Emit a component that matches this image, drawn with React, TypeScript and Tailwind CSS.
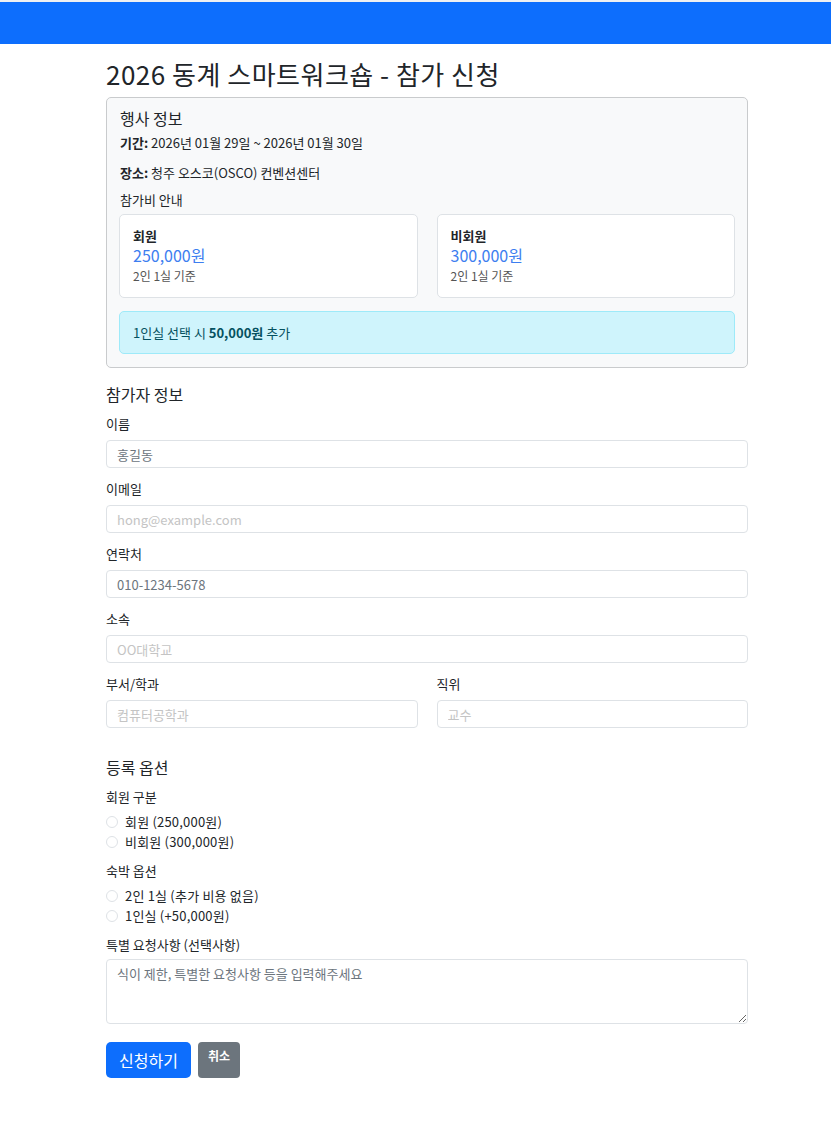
import React from 'react';

const font = { fontFamily: '"Noto Sans CJK KR", "Noto Sans", sans-serif' };

const inputCls =
  'block w-full h-[28px] px-[10px] text-[13px] text-[#212529] bg-white border border-[#dee2e6] rounded-[4px] placeholder:text-[#6c757d] outline-none';

const Field: React.FC<{ label: string; placeholder: string; faint?: boolean }> = ({ label, placeholder, faint }) => (
  <div className="mb-[12px]">
    <label className="block text-[13px] leading-[18px] mb-[7px] text-[#212529]">{label}</label>
    <input
      className={inputCls + (faint ? ' placeholder:text-[#c4c4c4]' : '')}
      placeholder={placeholder}
    />
  </div>
);

const Radio: React.FC<{ name: string; label: string }> = ({ name, label }) => (
  <label className="flex items-center h-[20px] text-[13px] text-[#212529] tracking-[0.2px]">
    <input
      type="radio"
      name={name}
      className="appearance-none w-[12px] h-[12px] rounded-full border border-[#dee2e6] bg-white mr-[7px]"
    />
    {label}
  </label>
);

const FeeCard: React.FC<{ title: string; price: string }> = ({ title, price }) => (
  <div className="flex-1 h-[84px] bg-white border border-[#dee2e6] rounded-[5px] px-[13px] pt-[12px]">
    <div className="text-[13px] leading-[18px] font-bold text-[#212529]">{title}</div>
    <div className="text-[16px] leading-[21px] text-[#3d7ef0]">{price}</div>
    <div className="text-[12px] leading-[20px] text-[#555]">2인 1실 기준</div>
  </div>
);

export default function App() {
  return (
    <div className="min-h-[1144px] bg-white text-[#212529]" style={font}>
      <div className="border-t-2 border-[#eef0f2] h-[44px] bg-[#0d6efd]" />
      <div className="ml-[106px] w-[642px] pt-[15px] pb-[60px]">
        <h3 className="text-[26px] leading-[30px] mb-[8px] tracking-[0.5px] text-[#212529]">2026 동계 스마트워크숍 - 참가 신청</h3>

        <div className="bg-[#f8f9fa] border border-[#c9cbcd] rounded-[5px] px-[12px] pt-[9px] pb-[13px]">
          <div className="text-[16px] leading-[22px] mb-[5px] pl-[1px]">행사 정보</div>
          <p className="text-[13px] leading-[18px] mb-[12px] pl-[1px]">
            <b>기간:</b> 2026년 01월 29일 ~ 2026년 01월 30일
          </p>
          <p className="text-[13px] leading-[18px] mb-[9px] pl-[1px]">
            <b>장소:</b> 청주 오스코(OSCO) 컨벤션센터
          </p>
          <div className="text-[13px] leading-[18px] mb-[5px] pl-[1px]">참가비 안내</div>
          <div className="flex gap-[19px] mb-[13px]">
            <FeeCard title="회원" price="250,000원" />
            <FeeCard title="비회원" price="300,000원" />
          </div>
          <div className="h-[43px] flex items-center px-[13px] bg-[#cff4fc] border border-[#9eeaf9] rounded-[5px] text-[13px] text-[#055160]">
            1인실 선택 시&nbsp;<b>50,000원</b>&nbsp;추가
          </div>
        </div>

        <div className="text-[16px] leading-[22px] mt-[15px] mb-[10px]">참가자 정보</div>
        <Field label="이름" placeholder="홍길동" />
        <Field label="이메일" placeholder="hong@example.com" faint />
        <Field label="연락처" placeholder="010-1234-5678" />
        <Field label="소속" placeholder="OO대학교" faint />
        <div className="flex gap-[19px]">
          <div className="flex-1">
            <Field label="부서/학과" placeholder="컴퓨터공학과" faint />
          </div>
          <div className="flex-1">
            <Field label="직위" placeholder="교수" faint />
          </div>
        </div>

        <div className="text-[16px] leading-[22px] mt-[16px] mb-[10px]">등록 옵션</div>
        <div className="text-[13px] leading-[18px] mb-[6px]">회원 구분</div>
        <Radio name="member" label="회원 (250,000원)" />
        <Radio name="member" label="비회원 (300,000원)" />
        <div className="text-[13px] leading-[18px] mt-[10px] mb-[6px]">숙박 옵션</div>
        <Radio name="room" label="2인 1실 (추가 비용 없음)" />
        <Radio name="room" label="1인실 (+50,000원)" />
        <div className="text-[13px] leading-[18px] mt-[10px] mb-[5px]">특별 요청사항 (선택사항)</div>
        <textarea
          className="block w-full h-[65px] px-[10px] py-[4px] text-[13px] border border-[#dee2e6] rounded-[4px] placeholder:text-[#6c757d] outline-none"
          placeholder="식이 제한, 특별한 요청사항 등을 입력해주세요"
        />

        <div className="flex gap-[7px] mt-[18px]">
          <button className="h-[36px] px-[13px] bg-[#0d6efd] text-white text-[16px] rounded-[5px]">신청하기</button>
          <button className="h-[36px] px-[10px] pb-[8px] bg-[#6c757d] text-white text-[12px] font-bold rounded-[4px]">취소</button>
        </div>
      </div>
    </div>
  );
}
